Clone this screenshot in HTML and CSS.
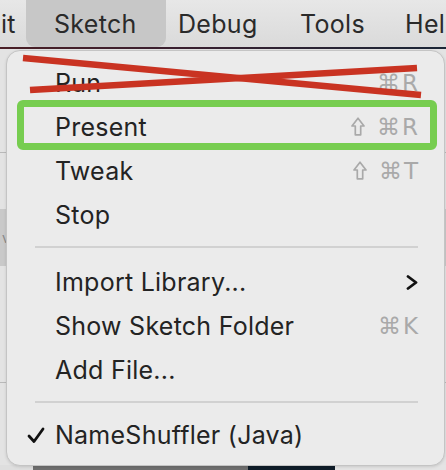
FILE: index.html
```html
<!DOCTYPE html>
<html>
<head>
<meta charset="utf-8">
<link rel="stylesheet" href="styles.css">
</head>
<body>
<div class="menubar">
  <span class="mb-item mb-edit">it</span>
  <span class="mb-item mb-sketch">Sketch</span>
  <span class="mb-item mb-debug">Debug</span>
  <span class="mb-item mb-tools">Tools</span>
  <span class="mb-item mb-help">Hel</span>
</div>
<div class="menubar-rule"></div>
<div class="workspace">
  <div class="ws-a"></div>
  <div class="ws-b"></div>
  <div class="ws-band"><span>va</span></div>
  <div class="ws-c"></div>
  <div class="ws-d"></div>
  <div class="ws-bottom">
    <div class="wb-1"></div><div class="wb-2"></div><div class="wb-3"></div><div class="wb-4"></div>
  </div>
</div>

<div class="menu">
  <div class="row"><span class="label">Run</span><span class="keys">⌘R</span></div>
  <div class="row"><span class="label">Present</span><span class="keys"><svg class="shift" width="14" height="19" viewBox="0 0 14 19"><path d="M7 1.2 L13 9 H9.7 V17.8 H4.3 V9 H1 Z" fill="none" stroke="#a9a9a9" stroke-width="1.7" stroke-linejoin="round"/></svg>⌘R</span></div>
  <div class="row"><span class="label">Tweak</span><span class="keys"><svg class="shift" width="14" height="19" viewBox="0 0 14 19"><path d="M7 1.2 L13 9 H9.7 V17.8 H4.3 V9 H1 Z" fill="none" stroke="#a9a9a9" stroke-width="1.7" stroke-linejoin="round"/></svg>⌘T</span></div>
  <div class="row"><span class="label">Stop</span></div>
  <div class="sep"></div>
  <div class="row"><span class="label">Import Library...</span>
    <svg class="chev" width="12" height="15" viewBox="0 0 12 15"><polyline points="2,1.5 10,7.5 2,13.5" fill="none" stroke="#111" stroke-width="2.8" stroke-linecap="round" stroke-linejoin="round"/></svg>
  </div>
  <div class="row"><span class="label">Show Sketch Folder</span><span class="keys">⌘K</span></div>
  <div class="row"><span class="label">Add File...</span></div>
  <div class="sep"></div>
  <div class="row">
    <svg class="check" width="18" height="17" viewBox="0 0 18 17"><polyline points="2,9 7,14.5 16,2" fill="none" stroke="#111" stroke-width="2.8" stroke-linecap="round" stroke-linejoin="round"/></svg>
    <span class="label">NameShuffler (Java)</span>
  </div>
</div>

<div class="highlight-box"></div>

<svg class="strike" width="446" height="470" viewBox="0 0 446 470">
  <line x1="23" y1="58" x2="421" y2="95" stroke="#c93322" stroke-width="6.5"/>
  <line x1="30" y1="90" x2="417" y2="68" stroke="#c93322" stroke-width="6.5"/>
</svg>
</body>
</html>
```

FILE: styles.css
```css
html, body {
  margin: 0;
  padding: 0;
}
body {
  width: 446px;
  height: 470px;
  overflow: hidden;
  position: relative;
  background: #e2e2e2;
  font-family: "Inter", "DejaVu Sans", sans-serif;
}
.menubar {
  height: 47px;
  display: flex;
  align-items: stretch;
  background: linear-gradient(#e7e7e7, #dadada);
  color: #2a2a2a;
  font-size: 25px;
  letter-spacing: 0.3px;
  white-space: nowrap;
}
.mb-item {
  display: flex;
  align-items: center;
}
.mb-edit {
  width: 26px;
  padding-left: 1px;
  box-sizing: border-box;
}
.mb-sketch {
  width: 140px;
  padding-left: 28px;
  box-sizing: border-box;
  background: #c7c7c7;
  border-radius: 0 0 9px 9px;
}
.mb-debug {
  margin-left: 12px;
  width: 122px;
}
.mb-tools {
  width: 105px;
}
.mb-help {
  width: 41px;
  overflow: hidden;
}
.menubar-rule {
  height: 2px;
  background: linear-gradient(90deg, #4a1f26 0%, #3a2030 40%, #1b2636 100%);
}
.workspace {
  height: 421px;
  display: flex;
  flex-direction: column;
}
.ws-a {
  height: 103px;
  background: #e3e3e3;
  border-bottom: 1px solid #b9b9b9;
}
.ws-b {
  height: 56px;
  background: #e3e3e3;
}
.ws-band {
  height: 57px;
  background: #c9c9c9;
  font-size: 14px;
  color: #8a8a8a;
  line-height: 57px;
  padding-left: 2px;
}
.ws-c {
  height: 116px;
  background: #e3e3e3;
  border-bottom: 1px solid #b9b9b9;
}
.ws-d {
  flex: 1;
  background: #e3e3e3;
}
.ws-bottom {
  height: 5px;
  display: flex;
}
.wb-1 { width: 33px; background: #dedede; }
.wb-2 { width: 215px; background: #6f6f6f; }
.wb-3 { width: 87px; background: #0f1d29; }
.wb-4 { flex: 1; background: #e4e4e4; }

.menu {
  position: absolute;
  left: 6px;
  top: 50px;
  width: 439px;
  height: 416px;
  box-sizing: border-box;
  background: #ebebeb;
  border: 1px solid #c4c4c4;
  border-radius: 14px;
  padding: 10px 26px 0 0;
  display: flex;
  flex-direction: column;
  color: #232323;
  font-size: 25px;
  letter-spacing: 0.25px;
  box-shadow: 0 1px 3px rgba(0,0,0,0.12);
}
.row {
  height: 44px;
  display: flex;
  align-items: center;
  padding-left: 48px;
  position: relative;
  white-space: nowrap;
}
.label {
  flex: 1;
  line-height: 44px;
}
.keys {
  display: flex;
  align-items: center;
  flex-shrink: 0;
  color: #a9a9a9;
  font-family: "DejaVu Sans", sans-serif;
  font-size: 23px;
  letter-spacing: 2px;
  margin-right: -2px;
}
.shift {
  display: block;
  flex-shrink: 0;
  width: 14px;
  height: 19px;
  margin-right: 12px;
  margin-top: -1px;
}
.chev {
  display: block;
  flex-shrink: 0;
}
.check {
  position: absolute;
  left: 20px;
  top: 14px;
}
.sep {
  height: 23px;
  display: flex;
  align-items: flex-start;
  margin-left: 28px;
}
.sep::before {
  content: "";
  display: block;
  margin-top: 9px;
  width: 100%;
  height: 2px;
  background: #d1d1d1;
}
.sep + .row + .row + .row + .sep {
  height: 21px;
}
.highlight-box {
  position: absolute;
  left: 17px;
  top: 100px;
  width: 420px;
  height: 50px;
  box-sizing: border-box;
  border: 7px solid #77cd50;
  border-radius: 6px;
}
.strike {
  position: absolute;
  left: 0;
  top: 0;
  pointer-events: none;
}
```
